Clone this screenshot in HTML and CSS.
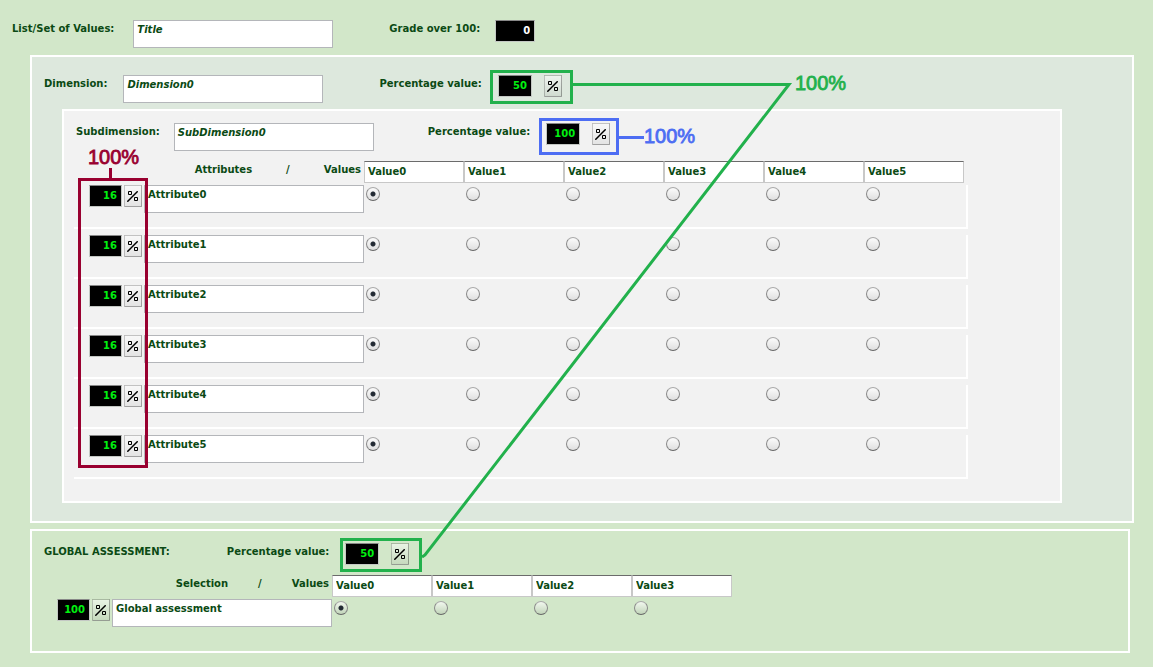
FILE: index.html
```html
<!DOCTYPE html>
<html lang="en">
<head>
<meta charset="utf-8">
<title>List/Set of Values</title>
<link rel="stylesheet" href="styles.css">
</head>
<body>
<svg class="sprite" aria-hidden="true">
  <symbol id="pct" viewBox="0 0 11 11">
    <path d="M0.3 10.700L10.700 0.3" stroke="#000" stroke-width="1.5" fill="none"/>
    <path d="M1.5 0.5h3v3h-3zM7.500 6.500h3v3h-3z" stroke="#000" stroke-width="1" fill="none"/>
  </symbol>
</svg>
<main class="page">
  <div class="bar top-bar">
    <label class="lbl" for="title">List/Set of Values:</label>
    <textarea id="title" class="name">Title</textarea>
    <label class="lbl" for="grade">Grade over 100:</label>
    <input id="grade" class="num grade" value="0">
  </div>

  <section class="box dimension">
    <div class="bar">
      <label class="lbl" for="dim">Dimension:</label>
      <textarea id="dim" class="name">Dimension0</textarea>
      <label class="lbl" for="dimp">Percentage value:</label>
      <input id="dimp" class="num" value="50">
      <button class="pct" aria-label="Percentage"><svg><use href="#pct"/></svg></button>
    </div>

    <section class="box subdimension">
      <div class="bar">
        <label class="lbl" for="sub">Subdimension:</label>
        <textarea id="sub" class="name">SubDimension0</textarea>
        <label class="lbl" for="subp">Percentage value:</label>
        <input id="subp" class="num" value="100">
        <button class="pct" aria-label="Percentage"><svg><use href="#pct"/></svg></button>
      </div>
      <table class="matrix lined">
        <thead>
          <tr>
            <th colspan="2"><div class="heads"><span>Attributes</span><span>/</span><span>Values</span></div></th>
            <th><input class="val" aria-label="Value 0" value="Value0"></th>
            <th><input class="val" aria-label="Value 1" value="Value1"></th>
            <th><input class="val" aria-label="Value 2" value="Value2"></th>
            <th><input class="val" aria-label="Value 3" value="Value3"></th>
            <th><input class="val" aria-label="Value 4" value="Value4"></th>
            <th class="last"><input class="val" aria-label="Value 5" value="Value5"></th>
          </tr>
        </thead>
        <tbody>
          <tr>
            <td class="weight"><div class="pair"><input class="num" aria-label="Weight 0" value="16"><button class="pct" aria-label="Percentage"><svg><use href="#pct"/></svg></button></div></td>
            <td class="attr"><textarea class="attribute" aria-label="Attribute 0">Attribute0</textarea></td>
            <td><input type="radio" name="a0" aria-label="Value0" checked></td>
            <td><input type="radio" name="a0" aria-label="Value1"></td>
            <td><input type="radio" name="a0" aria-label="Value2"></td>
            <td><input type="radio" name="a0" aria-label="Value3"></td>
            <td><input type="radio" name="a0" aria-label="Value4"></td>
            <td class="last"><input type="radio" name="a0" aria-label="Value5"></td>
          </tr>
          <tr>
            <td class="weight"><div class="pair"><input class="num" aria-label="Weight 1" value="16"><button class="pct" aria-label="Percentage"><svg><use href="#pct"/></svg></button></div></td>
            <td class="attr"><textarea class="attribute" aria-label="Attribute 1">Attribute1</textarea></td>
            <td><input type="radio" name="a1" aria-label="Value0" checked></td>
            <td><input type="radio" name="a1" aria-label="Value1"></td>
            <td><input type="radio" name="a1" aria-label="Value2"></td>
            <td><input type="radio" name="a1" aria-label="Value3"></td>
            <td><input type="radio" name="a1" aria-label="Value4"></td>
            <td class="last"><input type="radio" name="a1" aria-label="Value5"></td>
          </tr>
          <tr>
            <td class="weight"><div class="pair"><input class="num" aria-label="Weight 2" value="16"><button class="pct" aria-label="Percentage"><svg><use href="#pct"/></svg></button></div></td>
            <td class="attr"><textarea class="attribute" aria-label="Attribute 2">Attribute2</textarea></td>
            <td><input type="radio" name="a2" aria-label="Value0" checked></td>
            <td><input type="radio" name="a2" aria-label="Value1"></td>
            <td><input type="radio" name="a2" aria-label="Value2"></td>
            <td><input type="radio" name="a2" aria-label="Value3"></td>
            <td><input type="radio" name="a2" aria-label="Value4"></td>
            <td class="last"><input type="radio" name="a2" aria-label="Value5"></td>
          </tr>
          <tr>
            <td class="weight"><div class="pair"><input class="num" aria-label="Weight 3" value="16"><button class="pct" aria-label="Percentage"><svg><use href="#pct"/></svg></button></div></td>
            <td class="attr"><textarea class="attribute" aria-label="Attribute 3">Attribute3</textarea></td>
            <td><input type="radio" name="a3" aria-label="Value0" checked></td>
            <td><input type="radio" name="a3" aria-label="Value1"></td>
            <td><input type="radio" name="a3" aria-label="Value2"></td>
            <td><input type="radio" name="a3" aria-label="Value3"></td>
            <td><input type="radio" name="a3" aria-label="Value4"></td>
            <td class="last"><input type="radio" name="a3" aria-label="Value5"></td>
          </tr>
          <tr>
            <td class="weight"><div class="pair"><input class="num" aria-label="Weight 4" value="16"><button class="pct" aria-label="Percentage"><svg><use href="#pct"/></svg></button></div></td>
            <td class="attr"><textarea class="attribute" aria-label="Attribute 4">Attribute4</textarea></td>
            <td><input type="radio" name="a4" aria-label="Value0" checked></td>
            <td><input type="radio" name="a4" aria-label="Value1"></td>
            <td><input type="radio" name="a4" aria-label="Value2"></td>
            <td><input type="radio" name="a4" aria-label="Value3"></td>
            <td><input type="radio" name="a4" aria-label="Value4"></td>
            <td class="last"><input type="radio" name="a4" aria-label="Value5"></td>
          </tr>
          <tr>
            <td class="weight"><div class="pair"><input class="num" aria-label="Weight 5" value="16"><button class="pct" aria-label="Percentage"><svg><use href="#pct"/></svg></button></div></td>
            <td class="attr"><textarea class="attribute" aria-label="Attribute 5">Attribute5</textarea></td>
            <td><input type="radio" name="a5" aria-label="Value0" checked></td>
            <td><input type="radio" name="a5" aria-label="Value1"></td>
            <td><input type="radio" name="a5" aria-label="Value2"></td>
            <td><input type="radio" name="a5" aria-label="Value3"></td>
            <td><input type="radio" name="a5" aria-label="Value4"></td>
            <td class="last"><input type="radio" name="a5" aria-label="Value5"></td>
          </tr>
        </tbody>
      </table>
    </section>
  </section>

  <section class="box global">
    <div class="bar">
      <span class="lbl">GLOBAL ASSESSMENT:</span>
      <label class="lbl" for="glop">Percentage value:</label>
      <input id="glop" class="num" value="50">
      <button class="pct" aria-label="Percentage"><svg><use href="#pct"/></svg></button>
    </div>
    <table class="matrix">
      <thead>
        <tr>
          <th colspan="2"><div class="heads"><span>Selection</span><span>/</span><span>Values</span></div></th>
          <th><input class="val" aria-label="Value 0" value="Value0"></th>
          <th><input class="val" aria-label="Value 1" value="Value1"></th>
          <th><input class="val" aria-label="Value 2" value="Value2"></th>
          <th><input class="val" aria-label="Value 3" value="Value3"></th>
        </tr>
      </thead>
      <tbody>
        <tr>
          <td class="weight"><div class="pair"><input class="num" aria-label="Weight" value="100"><button class="pct" aria-label="Percentage"><svg><use href="#pct"/></svg></button></div></td>
          <td class="attr"><textarea class="attribute" aria-label="Selection">Global assessment</textarea></td>
          <td><input type="radio" name="g" aria-label="Value0" checked></td>
          <td><input type="radio" name="g" aria-label="Value1"></td>
          <td><input type="radio" name="g" aria-label="Value2"></td>
          <td><input type="radio" name="g" aria-label="Value3"></td>
        </tr>
      </tbody>
    </table>
  </section>

  <svg class="notes" width="900" height="600">
    <g class="green">
      <rect x="491.5" y="71.5" width="80" height="31"/>
      <rect x="341.5" y="539.5" width="79" height="31"/>
      <path d="M573 84.500H789L425 555L422 557"/>
      <text x="795" y="90">100%</text>
    </g>
    <g class="blue">
      <rect x="540.5" y="119.500" width="77" height="34"/>
      <path d="M619 137.500H644"/>
      <text x="644" y="143">100%</text>
    </g>
    <g class="red">
      <rect x="79.500" y="179.500" width="67" height="287"/>
      <path d="M110.500 168V179"/>
      <text x="88" y="164">100%</text>
    </g>
  </svg>
</main>
</body>
</html>
```

FILE: styles.css
```css
* { box-sizing: border-box; }

body {
  margin: 0;
  background: #d2e7c9;
  color: #0b4a14;
  font: bold 10px/12px "DejaVu Sans", Verdana, sans-serif;
}

.page {
  position: relative;
  padding: 20px 19px 14px 30px;
}

.sprite { position: absolute; width: 0; height: 0; }

input, textarea, button {
  margin: 0;
  font: inherit;
  color: inherit;
  border-radius: 0;
}

.bar {
  display: flex;
  align-items: flex-start;
}

.lbl { padding-top: 3px; white-space: nowrap; }

.top-bar { margin-left: -18px; }

textarea {
  display: block;
  height: 28px;
  padding: 3px;
  border: 1px solid #b4b6ba;
  background: #fff;
  resize: none;
  overflow: hidden;
}

.name {
  width: 200px;
  margin: 0 56px 0 16px;
  font-style: italic;
}

.top-bar .name { margin-left: 19px; }

.subdimension .name { margin: 0 54px 0 14px; }

.attribute { width: 220px; }

.num {
  width: 34px;
  height: 22px;
  padding: 0 4px 2px 0;
  border: 1px solid #c4c8c4;
  border-top-color: #888;
  background: #000;
  color: #00f010;
  text-align: right;
}

.bar .num { margin: 0 12px 0 16px; }

.bar .grade {
  width: 40px;
  margin-left: 15px;
  color: #fff;
}

.pct {
  display: flex;
  justify-content: flex-start;
  align-items: flex-start;
  width: 18px;
  height: 22px;
  padding: 5px 0 0 2px;
  border: 1px solid;
  border-color: rgba(0, 0, 0, .15) rgba(0, 0, 0, .3) rgba(0, 0, 0, .35) rgba(0, 0, 0, .2);
  background: linear-gradient(rgba(255, 255, 255, .5), rgba(0, 0, 0, .06));
}

.pct svg {
  flex: none;
  width: 11px;
  height: 11px;
}

.box {
  border: 2px solid #fff;
}

.dimension {
  margin-top: 7px;
  padding: 18px 0 18px 12px;
  background: #dde8dd;
}

.subdimension {
  margin: 6px 70px 0 18px;
  padding: 12px 0 22px 12px;
  background: #f2f2f2;
}

.global {
  margin: 6px 4px 0 0;
  padding: 12px 0 24px 12px;
}

.global .bar { margin-bottom: 10px; }
.global .lbl + .lbl { margin-left: 57px; }

.matrix {
  border-spacing: 0;
  table-layout: fixed;
}

.lined {
  margin-top: 10px;
  margin-left: -2px;
}

th, td {
  padding: 0;
  text-align: left;
  vertical-align: top;
}

th { font-weight: bold; }
td { padding-top: 2px; }

.lined td {
  padding-top: 6px;
  height: 50px;
  border-bottom: 2px solid #fff;
}

.lined tbody tr:first-child td { padding-top: 2px; height: 46px; }

.lined .last { padding-right: 4px; }

.lined td.last {
  background: linear-gradient(#fff, #fff) no-repeat right bottom / 2px calc(100% - 6px);
}

.lined tbody tr:first-child .last { background-size: 2px calc(100% - 2px); }

.heads {
  display: flex;
  justify-content: flex-end;
  gap: 34px;
  padding: 3px 3px 0 0;
}

.global .heads { gap: 30px; }

.val {
  display: block;
  width: 100px;
  height: 22px;
  padding: 0 3px 2px;
  border: 1px solid #c8c8c8;
  border-top-color: #6b6b6b;
  background: #fff;
}

.pair {
  display: flex;
  gap: 2px;
  padding: 0 2px 0 15px;
}

.global .pair { padding-left: 13px; }
.pair .num { width: 33px; }

[type="radio"] {
  appearance: none;
  display: block;
  width: 14px;
  height: 14px;
  margin: 2px;
  border: 1px solid;
  border-color: #aaa #888 #666 #888;
  border-radius: 50%;
  background: linear-gradient(rgba(255, 255, 255, .7), rgba(0, 0, 0, .08));
}

[type="radio"]:checked {
  background:
    radial-gradient(circle, #222a33 0 2px, transparent 3px),
    linear-gradient(rgba(255, 255, 255, .7), rgba(0, 0, 0, .08));
}

/* Explanatory marks drawn over the form */
.notes {
  position: absolute;
  top: 0;
  left: 0;
  pointer-events: none;
  fill: none;
  stroke-width: 3;
}

.notes text {
  font: 20px/24px "Liberation Sans", Arial, sans-serif;
  stroke-width: 0.8;
}

.green { stroke: #22b14c; }
.green text { fill: #22b14c; }
.blue { stroke: #4d6df3; }
.blue text { fill: #4d6df3; }
.red { stroke: #990030; }
.red text { fill: #990030; }
```
